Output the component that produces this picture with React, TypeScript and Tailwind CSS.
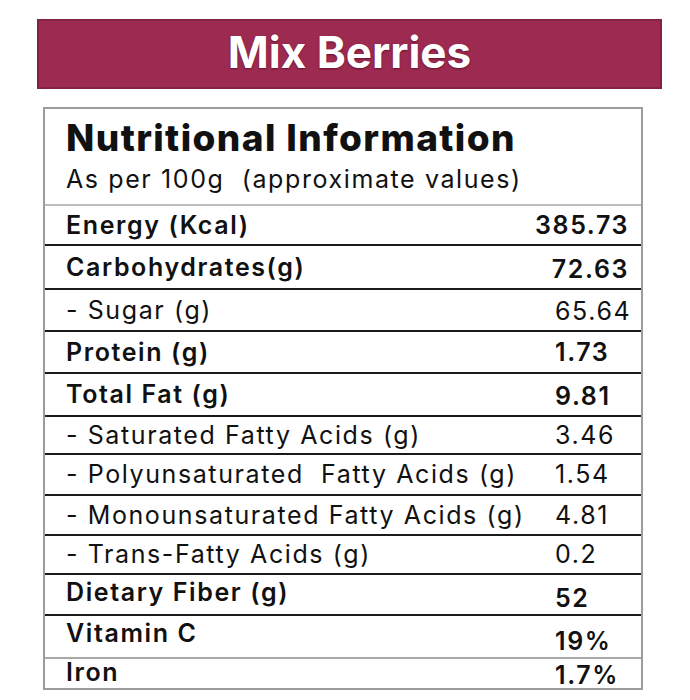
import React from "react";

type Row = {
  label: string;
  value: string;
  bold: boolean;
  h: string;
  border: string;
  right?: boolean;
  labelCls?: string;
  valueCls?: string;
};

const rows: Row[] = [
  { label: "Energy (Kcal)", value: "385.73", bold: true, h: "h-[40px]", border: "border-t-2 border-[#bdbdbd]", right: true },
  { label: "Carbohydrates(g)", value: "72.63", bold: true, h: "h-[44px]", border: "border-t-2 border-[#1a1a1a]", right: true, valueCls: "pt-[4px]" },
  { label: "- Sugar (g)", value: "65.64", bold: false, h: "h-[42px]", border: "border-t-2 border-[#1a1a1a]", valueCls: "pt-[3px]" },
  { label: "Protein (g)", value: "1.73", bold: true, h: "h-[42px]", border: "border-t-2 border-[#1a1a1a]" },
  { label: "Total Fat (g)", value: "9.81", bold: true, h: "h-[43px]", border: "border-t-2 border-[#1a1a1a]", valueCls: "pt-[3px]" },
  { label: "- Saturated Fatty Acids (g)", value: "3.46", bold: false, h: "h-[38px]", border: "border-t-2 border-[#1a1a1a]" },
  { label: "- Polyunsaturated\u00a0 Fatty Acids (g)", value: "1.54", bold: false, h: "h-[41px]", border: "border-t-2 border-[#1a1a1a]" },
  { label: "- Monounsaturated Fatty Acids (g)", value: "4.81", bold: false, h: "h-[40px]", border: "border-t-2 border-[#1a1a1a]" },
  { label: "- Trans-Fatty Acids (g)", value: "0.2", bold: false, h: "h-[39px]", border: "border-t-2 border-[#1a1a1a]" },
  { label: "Dietary Fiber (g)", value: "52", bold: true, h: "h-[41px]", border: "border-t-2 border-[#1a1a1a]", labelCls: "pb-[4px]", valueCls: "pt-[8px]" },
  { label: "Vitamin C", value: "19%", bold: true, h: "h-[43px]", border: "border-t-2 border-[#1a1a1a]", labelCls: "pb-[6px]", valueCls: "pt-[10px]" },
  { label: "Iron", value: "1.7%", bold: true, h: "h-[31px]", border: "border-t-2 border-[#a8a8a8]", labelCls: "pb-[2px]", valueCls: "pt-[4px]" },
];

export default function App() {
  return (
    <div
      className="w-[690px] h-[700px] bg-white overflow-hidden"
      style={{ fontFamily: "Inter, 'Noto Sans', sans-serif" }}
    >
      <div className="pt-[19px] pl-[37px]">
        <div className="w-[625px] h-[70px] bg-[#9d2a50] border-2 border-[#85223f] flex items-center justify-center">
          <span
            className="text-white text-[44px] font-bold tracking-[0px] leading-none pb-[4px]"
            style={{ textShadow: "0 1px 2px rgba(60,0,20,0.6)" }}
          >
            Mix Berries
          </span>
        </div>
      </div>

      <div className="mt-[18px] ml-[43px] w-[600px] border-2 border-[#9c9c9c] text-[#111]">
        <div className="h-[95px] pl-[21px] pt-[8px]">
          <div className="text-[37px] font-extrabold leading-[42px] tracking-[1.4px]">
            Nutritional Information
          </div>
          <div className="text-[25px] font-normal leading-[30px] mt-[5px] tracking-[1.6px]">
            As per 100g&nbsp; (approximate values)
          </div>
        </div>
        {rows.map((r, i) => (
          <div key={i} className={`flex items-center ${r.h} ${r.border}`}>
            <div
              className={`w-[488px] pl-[21px] text-[25px] leading-none tracking-[1.6px] whitespace-nowrap ${r.bold ? "font-semibold" : "font-normal"} ${r.labelCls ?? ""}`}
            >
              {r.label}
            </div>
            <div
              className={`w-[108px] text-[25px] leading-none tracking-[1.6px] whitespace-nowrap ${r.bold ? "font-semibold" : "font-normal"} ${r.right ? "text-right pr-[12px]" : "pl-[22px]"} ${r.valueCls ?? ""}`}
            >
              {r.value}
            </div>
          </div>
        ))}
      </div>
    </div>
  );
}
